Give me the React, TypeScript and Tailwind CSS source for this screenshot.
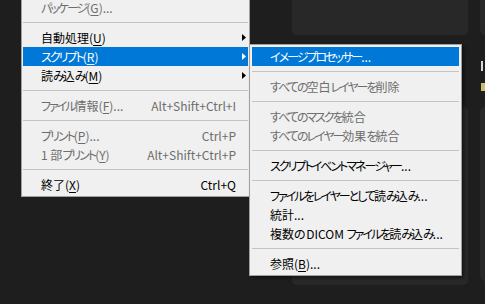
import React from 'react'

type Entry =
  | { kind: 'sep' }
  | {
      kind: 'item'
      label: string
      shortcut?: string
      disabled?: boolean
      active?: boolean
      submenu?: boolean
    }

const fileMenu: Entry[] = [
  { kind: 'item', label: 'パッケージ(&G)...', disabled: true },
  { kind: 'sep' },
  { kind: 'item', label: '自動処理(&U)', submenu: true },
  { kind: 'item', label: 'スクリプト(&R)', submenu: true, active: true },
  { kind: 'item', label: '読み込み(&M)', submenu: true },
  { kind: 'sep' },
  { kind: 'item', label: 'ファイル情報(&F)...', shortcut: 'Alt+Shift+Ctrl+I', disabled: true },
  { kind: 'sep' },
  { kind: 'item', label: 'プリント(&P)...', shortcut: 'Ctrl+P', disabled: true },
  { kind: 'item', label: '1 部プリント(&Y)', shortcut: 'Alt+Shift+Ctrl+P', disabled: true },
  { kind: 'sep' },
  { kind: 'item', label: '終了(&X)', shortcut: 'Ctrl+Q' },
]

const scriptMenu: Entry[] = [
  { kind: 'item', label: 'イメージプロセッサー...', active: true },
  { kind: 'sep' },
  { kind: 'item', label: 'すべての空白レイヤーを削除', disabled: true },
  { kind: 'sep' },
  { kind: 'item', label: 'すべてのマスクを統合', disabled: true },
  { kind: 'item', label: 'すべてのレイヤー効果を統合', disabled: true },
  { kind: 'sep' },
  { kind: 'item', label: 'スクリプトイベントマネージャー...' },
  { kind: 'sep' },
  { kind: 'item', label: 'ファイルをレイヤーとして読み込み...' },
  { kind: 'item', label: '統計...' },
  { kind: 'item', label: '複数の DICOM ファイルを読み込み...' },
  { kind: 'sep' },
  { kind: 'item', label: '参照(&B)...' },
]

// the UI font sets kana narrower than kanji; tighten kana runs to match
function Kana({ text }: { text: string }) {
  const parts = text.split(/([\u3040-\u30ff]+)/)
  return (
    <>
      {parts.map((p, i) =>
        /^[\u3040-\u30ff]+$/.test(p) ? (
          <span key={i} className="tracking-[-2px]">
            {p}
          </span>
        ) : (
          <React.Fragment key={i}>{p}</React.Fragment>
        ),
      )}
    </>
  )
}

// "&X" marks the accelerator letter, drawn underlined like Windows does
function Label({ text }: { text: string }) {
  const i = text.indexOf('&')
  if (i < 0) return <Kana text={text} />
  return (
    <>
      <Kana text={text.slice(0, i)} />
      <span className="underline underline-offset-[2px]">{text[i + 1]}</span>
      {text.slice(i + 2)}
    </>
  )
}

function Arrow({ color }: { color: string }) {
  return (
    <svg width="4" height="7" viewBox="0 0 4 7">
      <polygon points="0,0 4,3.5 0,7" fill={color} />
    </svg>
  )
}

function MenuRows({ entries }: { entries: Entry[] }) {
  return (
    <>
      {entries.map((e, i) => {
        if (e.kind === 'sep') {
          return (
            <div key={i} className="flex h-[11px] items-center">
              <div className="h-px w-full bg-[#c4c4c4]" />
            </div>
          )
        }
        const color = e.active ? 'text-white' : e.disabled ? 'text-[#6d6d6d]' : 'text-black'
        return (
          <div
            key={i}
            className={`flex h-[19px] items-center whitespace-nowrap pl-[18px] pr-[2px] leading-[19px] ${color} ${e.active ? 'bg-[#0078d7]' : ''}`}
          >
            <span>
              <Label text={e.label} />
            </span>
            <span className="ml-auto">{e.shortcut}</span>
            <span className="flex w-[10px] justify-end">
              {e.submenu && <Arrow color={e.active ? '#ffffff' : '#000000'} />}
            </span>
          </div>
        )
      })}
    </>
  )
}

export default function App() {
  return (
    <div className="relative h-[304px] w-[485px] overflow-hidden bg-[#1e1e1e] font-['Noto_Sans_CJK_JP',sans-serif] text-[12px] [font-feature-settings:'palt']">
      {/* workspace panels behind the menus */}
      <div className="flex h-full pl-[292px]">
        <div className="flex w-[176px] flex-col">
          <div className="h-[35px] rounded-b-[5px] bg-[#282828]" />
          <div className="mt-[72px] h-[178px] rounded-[5px] bg-[#282828]" />
        </div>
        <div className="ml-[12px] flex flex-1 flex-col">
          <div className="h-[35px] rounded-bl-[5px] bg-[#282828]" />
          <div className="ml-[1px] mt-[26px] h-[10px] w-[2px] bg-[#d8d8d8]" />
          <div className="ml-[1px] mt-[12px] h-[8px] w-[4px] bg-[#c8c070]" />
          <div className="mt-[16px] h-[174px] rounded-l-[5px] bg-[#282828]" />
        </div>
      </div>

      {/* File menu */}
      <div className="absolute left-[21px] top-[-2px] w-[229px] border border-t-0 border-[#a0a0a0] bg-[#f0f0f0] px-[1px] pb-[2px]">
        <MenuRows entries={fileMenu} />
      </div>

      {/* Scripts submenu */}
      <div className="absolute left-[249px] top-[44px] w-[213px] border border-[#a0a0a0] bg-[#f0f0f0] p-[2px] shadow-[2px_2px_3px_rgba(0,0,0,0.45)]">
        <MenuRows entries={scriptMenu} />
      </div>
    </div>
  )
}
